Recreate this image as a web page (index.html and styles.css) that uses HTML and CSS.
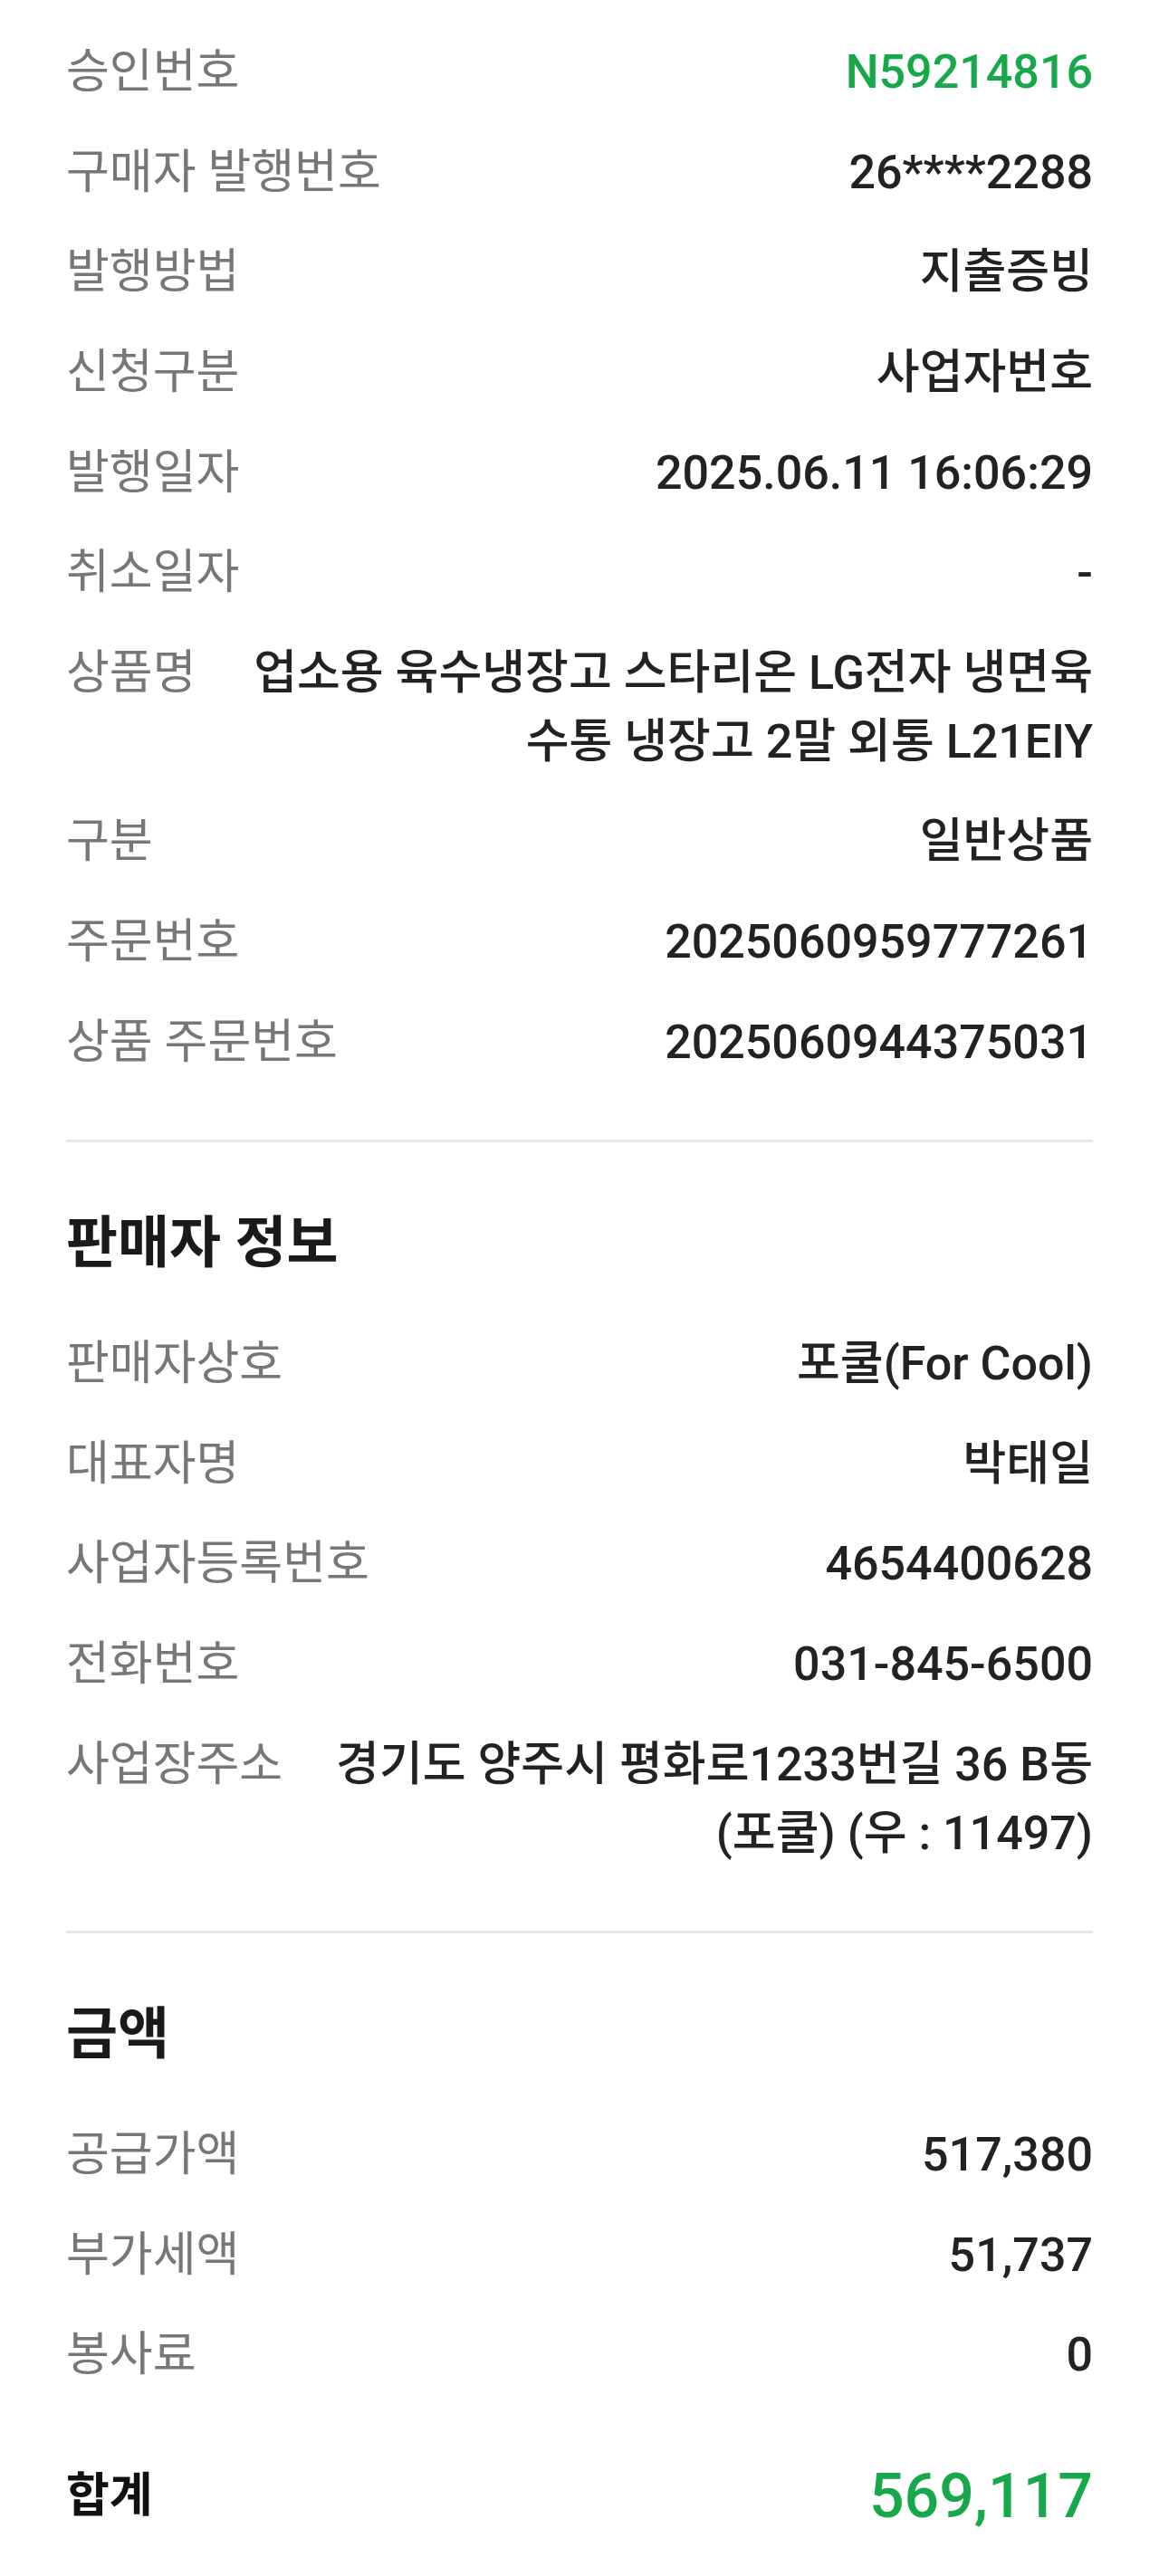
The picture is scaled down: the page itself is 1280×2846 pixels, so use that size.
FILE: index.html
```html
<!DOCTYPE html>
<html lang="ko">
<head>
<meta charset="utf-8">
<meta name="viewport" content="width=device-width,initial-scale=1.0">
<title>현금영수증 상세</title>
<link rel="stylesheet" href="styles.css">
</head>
<body>
<div class="receipt">
    <section class="block">
        <div class="row"><span class="label">승인번호</span><span class="value green">N59214816</span></div>
        <div class="row"><span class="label">구매자 발행번호</span><span class="value">26****2288</span></div>
        <div class="row"><span class="label">발행방법</span><span class="value">지출증빙</span></div>
        <div class="row"><span class="label">신청구분</span><span class="value">사업자번호</span></div>
        <div class="row"><span class="label">발행일자</span><span class="value">2025.06.11 16:06:29</span></div>
        <div class="row"><span class="label">취소일자</span><span class="value">-</span></div>
        <div class="row"><span class="label">상품명</span><span class="value">업소용 육수냉장고 스타리온 LG전자 냉면육수통 냉장고 2말 외통 L21EIY</span></div>
        <div class="row"><span class="label">구분</span><span class="value">일반상품</span></div>
        <div class="row"><span class="label">주문번호</span><span class="value">2025060959777261</span></div>
        <div class="row"><span class="label">상품 주문번호</span><span class="value">2025060944375031</span></div>
    </section>

    <hr class="divider">

    <section class="block">
        <h2 class="block-title">판매자 정보</h2>
        <div class="row"><span class="label">판매자상호</span><span class="value">포쿨(For Cool)</span></div>
        <div class="row"><span class="label">대표자명</span><span class="value">박태일</span></div>
        <div class="row"><span class="label">사업자등록번호</span><span class="value">4654400628</span></div>
        <div class="row"><span class="label">전화번호</span><span class="value">031-845-6500</span></div>
        <div class="row"><span class="label">사업장주소</span><span class="value">경기도 양주시 평화로1233번길 36 B동 (포쿨) (우 : 11497)</span></div>
    </section>

    <hr class="divider">

    <section class="block">
        <h2 class="block-title">금액</h2>
        <div class="row"><span class="label">공급가액</span><span class="value">517,380</span></div>
        <div class="row"><span class="label">부가세액</span><span class="value">51,737</span></div>
        <div class="row"><span class="label">봉사료</span><span class="value">0</span></div>
        <div class="row total"><span class="label">합계</span><span class="value green">569,117</span></div>
    </section>
</div>
</body>
</html>
```

FILE: styles.css
```css
html { background: #fff; }
body { margin: 0; padding: 0; font-family: Roboto, "Noto Sans CJK KR", sans-serif; color: #1f1f1f; }

.receipt { padding: 25px 73px 80px; }

.block { margin: 0; }
.block-title { margin: 74px 0 40px; font-size: 62px; line-height: 76px; font-weight: 700; color: #1a1a1a; }

.row { display: flex; justify-content: space-between; align-items: flex-start; gap: 32px; padding: 17.3px 0; line-height: 76px; font-size: 52px; }
.label { flex-shrink: 0; white-space: nowrap; color: #777; }
.value { text-align: right; font-weight: 500; color: #222; }
.green { color: #17a84b; }

.total { margin-top: 45px; }
.total .label { font-weight: 700; color: #111; }
.total .value { font-size: 68px; }

.divider { margin: 52px 0 0; border: none; height: 3px; background: #e8e8e8; }
```
